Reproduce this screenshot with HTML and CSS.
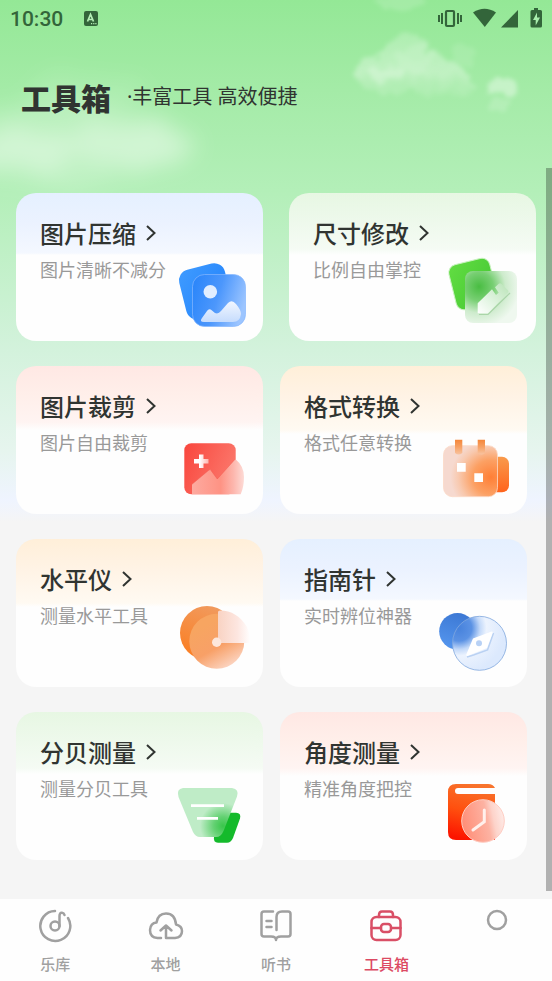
FILE: index.html
```
<!DOCTYPE html>
<html lang="zh-CN">
<head>
    <meta charset="UTF-8">
    <meta name="viewport" content="width=device-width, initial-scale=1.0">
    <title>工具箱</title>
    <link rel="stylesheet" href="styles.css">
</head>
<body>

<!-- clouds -->
<svg class="clouds" width="552" height="200" viewBox="0 0 552 200" aria-hidden="true">
    <defs>
        <filter id="puff" x="-20%" y="-20%" width="140%" height="140%">
            <feTurbulence type="fractalNoise" baseFrequency="0.08" numOctaves="4" seed="4" result="n"/>
            <feDisplacementMap in="SourceGraphic" in2="n" scale="16" xChannelSelector="R" yChannelSelector="G" result="d"/>
            <feGaussianBlur in="d" stdDeviation="2"/>
        </filter>
        <filter id="haze" x="-50%" y="-80%" width="200%" height="260%">
            <feTurbulence type="fractalNoise" baseFrequency="0.03" numOctaves="3" seed="8" result="n"/>
            <feDisplacementMap in="SourceGraphic" in2="n" scale="30" xChannelSelector="R" yChannelSelector="G" result="d"/>
            <feGaussianBlur in="d" stdDeviation="11"/>
        </filter>
        <linearGradient id="cloudFade" x1="0" y1="0" x2="0" y2="1">
            <stop offset="0" stop-color="#fff" stop-opacity=".2"/>
            <stop offset=".6" stop-color="#fff" stop-opacity=".34"/>
            <stop offset="1" stop-color="#fff" stop-opacity=".04"/>
        </linearGradient>
    </defs>
    <g filter="url(#haze)" fill="#fff">
        <ellipse cx="65" cy="144" rx="115" ry="42" opacity=".2"/>
        <ellipse cx="130" cy="144" rx="64" ry="24" opacity=".3"/>
        <ellipse cx="22" cy="150" rx="48" ry="20" opacity=".32"/>
        <ellipse cx="90" cy="92" rx="60" ry="22" opacity=".1"/>
    </g>
    <g filter="url(#puff)">
        <path d="M354 74Q360 50 380 56Q386 38 402 34Q424 32 426 52Q440 46 446 60Q464 66 478 88Q468 102 448 94Q430 102 414 90Q390 98 362 86Z" fill="url(#cloudFade)"/>
        <ellipse cx="386" cy="74" rx="18" ry="8" fill="#fff" opacity=".2"/>
        <ellipse cx="415" cy="60" rx="18" ry="14" fill="#fff" opacity=".1"/>
        <ellipse cx="464" cy="54" rx="12" ry="12" fill="#fff" opacity=".1"/>
        <path d="M485 94Q492 77 508 77L517 80V92Q500 98 485 94Z" fill="#fff" opacity=".38"/>
        <ellipse cx="501" cy="105" rx="11" ry="6" fill="#fff" opacity=".16"/>
        <ellipse cx="400" cy="2" rx="26" ry="7" fill="#fff" opacity=".15"/>
    </g>
</svg>

<div class="status-bar">
    <span class="time">10:30</span>
    <svg width="16" height="16" viewBox="0 0 16 16">
        <rect x="1" y="1" width="14" height="15" rx="2" fill="#33653a"/>
        <path d="M4.5 11.500L7.500 4.500L10.500 11.500M5.600 9.500H9.400" fill="none" stroke="#b5efb6" stroke-width="1.700"/>
        <path d="M8 13.600h1.200M10.200 13.600h1.200M12.300 13.600h1.200" stroke="#b5efb6" stroke-width="1.200"/>
    </svg>
    <svg class="status-icons" width="108" height="24" viewBox="436 6 108 24">
        <g fill="#33653a">
            <rect x="446" y="11" width="8" height="15" rx="1" fill="none" stroke="#33653a" stroke-width="2.200"/>
            <path d="M441 13h2v11h-2zM438 15h2v7h-2zM457 13h2v11h-2zM460 15h2v7h-2z"/>
            <path d="M473 12.500Q484.500 5 496 12.500L484.800 27Z"/>
            <path d="M518 10V27.500H501Z"/>
            <path d="M534 8h4v2h2.500q1.500 0 1.500 1.500V26q0 1.500-1.500 1.500H532q-1.500 0-1.500-1.500V11.500Q530.500 10 532 10h2z"/>
        </g>
        <path d="M537 12.500L533 20h2.700v5.500L540 17.500h-3z" fill="#a9eead"/>
    </svg>
</div>

<header class="header">
    <h1>工具箱</h1>
    <p>·丰富工具 高效便捷</p>
</header>

<main class="tools">
    <div class="row spread">
        <a class="card blue" href="#">
            <div class="text">
                <h2>图片压缩 <svg class="arrow" viewBox="0 0 10 18"><path d="M1 2L8.500 9L1 16"/></svg></h2>
                <p>图片清晰不减分</p>
            </div>
            <svg class="icon" viewBox="0 0 80 80">
                <defs>
                    <linearGradient id="a1" x1="0" y1="0" x2="1" y2="1"><stop offset="0" stop-color="#3f9bff"/><stop offset="1" stop-color="#1f80fb"/></linearGradient>
                    <linearGradient id="a2" x1="0" y1=".2" x2="1" y2=".5"><stop offset="0" stop-color="#2b86fa"/><stop offset=".5" stop-color="#4c97fc"/><stop offset="1" stop-color="#9cc5ff"/></linearGradient>
                    <linearGradient id="a3" x1="0" y1="0" x2="0" y2="1"><stop offset="0" stop-color="#f2f7ff"/><stop offset="1" stop-color="#c6dcfd"/></linearGradient>
                </defs>
                <rect x="9" y="13" width="47" height="51" rx="11" transform="rotate(-14 32 38)" fill="url(#a1)"/>
                <rect x="19.500" y="21.500" width="53" height="52" rx="12" fill="url(#a2)" stroke="#86b8fd" stroke-width=".7"/>
                <circle cx="37.300" cy="38.700" r="6.800" fill="#e1eeff"/>
                <path d="M31 69Q26 69 29 65L34 58Q36 55 39 57.500Q44 63 48 58L55 50Q59 46 63 51Q68 57 68 61Q67 69 60 69Z" fill="url(#a3)"/>
            </svg>
        </a>
        <a class="card green" href="#">
            <div class="text">
                <h2>尺寸修改 <svg class="arrow" viewBox="0 0 10 18"><path d="M1 2L8.500 9L1 16"/></svg></h2>
                <p>比例自由掌控</p>
            </div>
            <svg class="icon" viewBox="0 0 80 80">
                <defs>
                    <linearGradient id="b1" x1="0" y1="0" x2="1" y2="1"><stop offset="0" stop-color="#62dd42"/><stop offset="1" stop-color="#42c532"/></linearGradient>
                    <radialGradient id="b2" cx=".27" cy=".3" r=".78"><stop offset="0" stop-color="#49bd42"/><stop offset=".35" stop-color="#78cf73"/><stop offset=".65" stop-color="#cdebcc"/><stop offset="1" stop-color="#eff8ef"/></radialGradient>
                    <linearGradient id="b3" x1="1" y1="0" x2="0" y2="1"><stop offset="0" stop-color="#b9e3b7"/><stop offset=".6" stop-color="#e2f5e2"/><stop offset="1" stop-color="#fff"/></linearGradient>
                </defs>
                <rect x="6" y="8" width="42" height="46" rx="8" transform="rotate(-14 27 31)" fill="url(#b1)" stroke="#c9f2c0"/>
                <rect x="19" y="18" width="52" height="52" rx="8" fill="url(#b2)"/>
                <path d="M33 61.500L42 61.500L64 40" fill="none" stroke="#82bd80" stroke-width="1.200" opacity=".5"/>
                <path d="M31.700 60.300V50.300L46 36.300L50 42L52.700 39.700L49 34.300L52.500 31Q54 29.500 55.500 31L62 37.300Q63.200 38.700 62 40L42 60.300Z" fill="url(#b3)"/>
            </svg>
        </a>
    </div>

    <div class="row">
        <a class="card pink" href="#">
            <div class="text">
                <h2>图片裁剪 <svg class="arrow" viewBox="0 0 10 18"><path d="M1 2L8.500 9L1 16"/></svg></h2>
                <p>图片自由裁剪</p>
            </div>
            <svg class="icon" viewBox="0 0 80 80">
                <defs>
                    <linearGradient id="c1" x1="0" y1="0" x2="1" y2=".4"><stop offset="0" stop-color="#f9463d"/><stop offset="1" stop-color="#fb766a"/></linearGradient>
                    <linearGradient id="c2" x1="0" y1=".6" x2="1" y2=".6"><stop offset="0" stop-color="#fdaaa0"/><stop offset=".55" stop-color="#fe9384"/><stop offset=".8" stop-color="#fdb7ae"/><stop offset="1" stop-color="#fddbd6"/></linearGradient>
                    <linearGradient id="c3"><stop offset=".4" stop-color="#fff"/><stop offset="1" stop-color="#fdb5ae"/></linearGradient>
                </defs>
                <rect x="11.300" y="17.300" width="51.400" height="51" rx="7" fill="url(#c1)"/>
                <path d="M26 28.500h4.500v4.500h5v4.500h-5v4.500H26v-4.500h-5V33h5z" fill="url(#c3)"/>
                <path d="M19 68.300V58.300L36 44Q37.300 43 38 44.500L44.300 53L62.300 33Q71 40 71 51Q71 61 67.700 68.300Z" fill="url(#c2)"/>
                <path d="M19 58.300L36 44Q37.300 43 38 44.500L44.300 53L62.300 33" fill="none" stroke="#f3594d" stroke-width=".8" opacity=".6"/>
            </svg>
        </a>
        <a class="card orange" href="#">
            <div class="text">
                <h2>格式转换 <svg class="arrow" viewBox="0 0 10 18"><path d="M1 2L8.500 9L1 16"/></svg></h2>
                <p>格式任意转换</p>
            </div>
            <svg class="icon" viewBox="0 0 80 80">
                <defs>
                    <linearGradient id="d1" x1="0" y1="0" x2="0" y2="1"><stop offset="0" stop-color="#f99a4c"/><stop offset="1" stop-color="#ff641c"/></linearGradient>
                    <radialGradient id="d2" cx=".88" cy=".62" r=".75"><stop offset="0" stop-color="#ff7f36"/><stop offset=".45" stop-color="#fca063"/><stop offset=".8" stop-color="#f8c9af"/><stop offset="1" stop-color="#f6d9cf"/></radialGradient>
                    <linearGradient id="d3" x1="0" y1="0" x2="0" y2="1"><stop offset="0" stop-color="#f4863a"/><stop offset=".5" stop-color="#f7a266"/><stop offset="1" stop-color="#f8c3a0"/></linearGradient>
                </defs>
                <rect x="42" y="30.700" width="30" height="35.600" rx="7" fill="url(#d1)"/>
                <rect x="6.500" y="19.700" width="54" height="51" rx="9" fill="url(#d2)" stroke="#fbd9c6" stroke-width=".8"/>
                <path d="M18 13.700h7.300V27q-3.600 3-7.300 0zM40.700 13.700H48V27q-3.600 3-7.300 0z" fill="url(#d3)"/>
                <path d="M20 37h8.700v8.700H20zM37.300 47.300H46V56h-8.700z" fill="#fff"/>
            </svg>
        </a>
    </div>

    <div class="row">
        <a class="card orange" href="#">
            <div class="text">
                <h2>水平仪 <svg class="arrow" viewBox="0 0 10 18"><path d="M1 2L8.500 9L1 16"/></svg></h2>
                <p>测量水平工具</p>
            </div>
            <svg class="icon" viewBox="0 0 80 80">
                <defs>
                    <linearGradient id="e1" x1=".6" y1="0" x2=".2" y2="1"><stop offset="0" stop-color="#f19a5d"/><stop offset="1" stop-color="#fb7d20"/></linearGradient>
                    <linearGradient id="e2" x1=".3" y1=".2" x2=".75" y2="1"><stop offset="0" stop-color="#f7a561"/><stop offset=".5" stop-color="#f8a067"/><stop offset="1" stop-color="#fcdacb"/></linearGradient>
                    <linearGradient id="e3"><stop offset="0" stop-color="#f9d3c3"/><stop offset=".6" stop-color="#fde6e0"/><stop offset="1" stop-color="#fff"/></linearGradient>
                </defs>
                <circle cx="34" cy="34" r="27" fill="url(#e1)"/>
                <circle cx="43.800" cy="42.300" r="27.500" fill="url(#e2)"/>
                <path d="M45 44V13q0-1.500 2-1.500Q64 11.500 74 28Q77.500 36 77.500 44Z" fill="url(#e3)"/>
                <circle cx="43.700" cy="43.300" r="4.700" fill="#fde7db"/>
            </svg>
        </a>
        <a class="card blue" href="#">
            <div class="text">
                <h2>指南针 <svg class="arrow" viewBox="0 0 10 18"><path d="M1 2L8.500 9L1 16"/></svg></h2>
                <p>实时辨位神器</p>
            </div>
            <svg class="icon" viewBox="0 0 80 80">
                <defs>
                    <linearGradient id="f1" x1=".6" y1="0" x2=".3" y2="1"><stop offset="0" stop-color="#3c78d4"/><stop offset="1" stop-color="#5596ee"/></linearGradient>
                    <radialGradient id="f2" cx=".12" cy=".22" r=".85"><stop offset="0" stop-color="#4782dc"/><stop offset=".28" stop-color="#5b92e4"/><stop offset=".46" stop-color="#c3d9f9"/><stop offset=".6" stop-color="#ecf3fe"/><stop offset="1" stop-color="#dce9fd"/></radialGradient>
                </defs>
                <circle cx="20.500" cy="32.300" r="18.300" fill="url(#f1)"/>
                <circle cx="42.500" cy="44.300" r="27" fill="url(#f2)" stroke="#80a7dd" stroke-width=".8"/>
                <path d="M30 58L36.500 56L50.500 51L56.500 34" fill="none" stroke="#9bbdeb" stroke-width="1.500" opacity=".6"/>
                <path d="M54 32.800Q56.500 32 55.500 34.500L50 49L31 56.800Q28.500 57.500 29.500 55L36 39.500Z" fill="#fff"/>
                <circle cx="42" cy="44.300" r="3" fill="#b8d1f5"/>
            </svg>
        </a>
    </div>

    <div class="row">
        <a class="card green" href="#">
            <div class="text">
                <h2>分贝测量 <svg class="arrow" viewBox="0 0 10 18"><path d="M1 2L8.500 9L1 16"/></svg></h2>
                <p>测量分贝工具</p>
            </div>
            <svg class="icon" viewBox="0 0 80 80">
                <defs>
                    <radialGradient id="g1" gradientUnits="userSpaceOnUse" cx="50" cy="54" r="23"><stop offset="0" stop-color="#39c64b"/><stop offset=".4" stop-color="#63d172"/><stop offset="1" stop-color="#bfecc7"/></radialGradient>
                </defs>
                <path d="M50 40.700H63Q68.500 41 67 46.500L60 66Q58 70.700 54 70.700H45Q40 70.700 41 65Z" fill="#14ba2b"/>
                <path d="M10 16H59Q66.500 17 64 24.500L50.500 59Q48 65 43 65H27Q22.500 65 20 60L5.500 25Q3 17 10 16Z" fill="url(#g1)"/>
                <path d="M18 33.700H51M24 46.300H45" stroke="#fff" stroke-width="2.700"/>
            </svg>
        </a>
        <a class="card pink" href="#">
            <div class="text">
                <h2>角度测量 <svg class="arrow" viewBox="0 0 10 18"><path d="M1 2L8.500 9L1 16"/></svg></h2>
                <p>精准角度把控</p>
            </div>
            <svg class="icon" viewBox="0 0 80 80">
                <defs>
                    <linearGradient id="h1" x1=".6" y1="0" x2=".4" y2="1"><stop offset="0" stop-color="#f8742d"/><stop offset=".5" stop-color="#ff500f"/><stop offset="1" stop-color="#fc1400"/></linearGradient>
                    <linearGradient id="h2" x1="0" y1=".6" x2="1" y2=".4"><stop offset="0" stop-color="#ff8d76"/><stop offset=".6" stop-color="#fdb2a2"/><stop offset=".75" stop-color="#fdd3ca"/><stop offset="1" stop-color="#feebe7"/></linearGradient>
                </defs>
                <path d="M19 12H51Q56 12 58 16H21Q18 16 18 19T21 22H58V68H19Q11 68 11 60V20Q11 12 19 12Z" fill="url(#h1)"/>
                <circle cx="46" cy="49" r="21.300" fill="url(#h2)" stroke="#fecdc3"/>
                <path d="M47.300 38V49.700L36 58" fill="none" stroke="#fff0ec" stroke-width="3" stroke-linecap="round"/>
            </svg>
        </a>
    </div>
</main>

<nav class="tabbar">
    <a href="#">
        <svg viewBox="0 0 36 36"><path d="M18 3A15 15 0 1 0 31 10"/><circle cx="18" cy="18" r="4.500"/><path d="M22.500 18V8Q22.500 4.500 25 4.800Q27 5 27.500 7"/></svg>
        <span>乐库</span>
    </a>
    <a href="#">
        <svg viewBox="0 0 36 36"><path d="M13 30H9.500Q2 29.500 2 22Q2.500 15 8.500 14.500Q10 5.500 18 5.500Q27 5.500 28 16.500Q34 18 34 23Q34 29.500 27 30H18V18M12.500 22.500L18 17.500L23.500 22.500"/></svg>
        <span>本地</span>
    </a>
    <a href="#">
        <svg viewBox="0 0 36 36"><path d="M15 3.500H6Q3.500 3.500 3.500 6V26Q3.500 28.500 6 28.500H13Q18 28.500 18 32Q18 28.500 23 28.500H30Q32.500 28.500 32.500 26V6Q32.500 3.500 30 3.500H24Q18.500 3.500 18.500 9V22M8.500 13h5M8.500 19h5"/></svg>
        <span>听书</span>
    </a>
    <a class="active" href="#">
        <svg viewBox="0 0 36 36"><rect x="3.500" y="9" width="29" height="23" rx="5"/><path d="M11 9V7Q11 3.500 14 3.500H22Q25 3.500 25 7V9M3.500 20H13M23 20H32.500"/><rect x="13" y="16" width="10" height="8" rx="3"/></svg>
        <span>工具箱</span>
    </a>
    <a href="#" aria-label="我的">
        <svg viewBox="0 0 36 36"><circle cx="18" cy="12" r="9"/></svg>
    </a>
</nav>

<div class="scroll-thumb"></div>

</body>
</html>
```
FILE: styles.css
```
* {
    box-sizing: border-box;
}
body {
    margin: 0;
    min-height: 100vh;
    display: flex;
    flex-direction: column;
    position: relative;
    font-family: "Noto Sans CJK SC", "Noto Sans", sans-serif;
    color: #303431;
    background: #f5f5f5 linear-gradient(#94e896, #a4eba7 90px, #b3efb8 190px, #d3f2dc 350px, #e6f5ee 450px, #eff4ff 500px, #f5f5f5 522px) no-repeat;
}
h1, h2, p {
    margin: 0;
}
a {
    color: inherit;
    text-decoration: none;
}
.clouds {
    position: absolute;
    top: 0;
    left: 0;
    width: 100%;
}

/* top */
.status-bar {
    position: relative;
    display: flex;
    align-items: center;
    height: 36px;
    padding: 0 8px 0 10px;
    color: #33653a;
}
.time {
    font-family: Roboto, sans-serif;
    font-size: 21px;
    font-weight: 500;
    line-height: 24px;
    padding-top: 2px;
    margin-right: 20px;
}
.status-icons {
    margin-left: auto;
}
.header {
    position: relative;
    display: flex;
    align-items: center;
    gap: 16px;
    padding: 41px 21px 76px;
}
.header h1 {
    font-size: 30px;
    font-weight: 900;
    line-height: 40px;
}
.header p {
    font-family: "Noto Sans", "Noto Sans CJK SC", sans-serif;
    font-size: 20px;
    line-height: 40px;
}

/* cards */
.tools {
    position: relative;
    flex: 1;
    display: flex;
    flex-direction: column;
    gap: 25px;
    padding: 0 16px 39px;
}
.row {
    display: flex;
    gap: 17px;
}
.row.spread {
    justify-content: space-between;
}
.card {
    display: flex;
    justify-content: space-between;
    width: 47.5%;
    min-height: 148px;
    padding: 22px 10px 8px 24px;
    border-radius: 20px;
    background-color: #fefefe;
    background-repeat: no-repeat;
}
.card h2 {
    display: flex;
    align-items: center;
    gap: 10px;
    font-size: 24px;
    font-weight: 500;
    line-height: 36px;
    white-space: nowrap;
}
.card p {
    font-size: 18px;
    font-weight: 400;
    line-height: 36px;
    color: #999;
    white-space: nowrap;
}
.text {
    width: 0;
}
.arrow {
    width: 10px;
    height: 18px;
    flex-shrink: 0;
    fill: none;
    stroke: #303431;
    stroke-width: 2;
}
.icon {
    width: 80px;
    height: 80px;
    align-self: flex-end;
    flex-shrink: 0;
}
.blue {
    background-image: linear-gradient(#e5f0ff, #ebf2ff 30px, #f4f8ff 60px, #fefefe 62px);
}
.green {
    background-image: linear-gradient(#e7f7e3, #eef9ec 30px, #f5fbf4 56px, #fefefe 62px);
}
.pink {
    background-image: linear-gradient(#ffe8e4, #ffefea 30px, #fff4f2 56px, #fefefe 64px);
}
.orange {
    background-image: linear-gradient(#ffefd9, #fff3e5 30px, #fffaf2 64px, #fefefe 68px);
}

/* bottom tabs */
.tabbar {
    position: relative;
    display: flex;
    min-height: 83px;
    padding-top: 9px;
    background: #fefefe;
}
.tabbar a {
    flex: 1;
    display: flex;
    flex-direction: column;
    align-items: center;
    gap: 8px;
    font-size: 15px;
    font-weight: 500;
    line-height: 24px;
    color: #a0a0a0;
}
.tabbar svg {
    width: 36px;
    height: 36px;
    fill: none;
    stroke: #a0a0a0;
    stroke-width: 2.5;
    stroke-linecap: round;
    stroke-linejoin: round;
}
.tabbar .active {
    color: #dc4a63;
}
.tabbar .active svg {
    stroke: #d94f66;
}

.scroll-thumb {
    position: absolute;
    top: 168px;
    right: 0;
    bottom: 91px;
    width: 6px;
    background: rgba(0, 0, 0, 0.28);
}
```
